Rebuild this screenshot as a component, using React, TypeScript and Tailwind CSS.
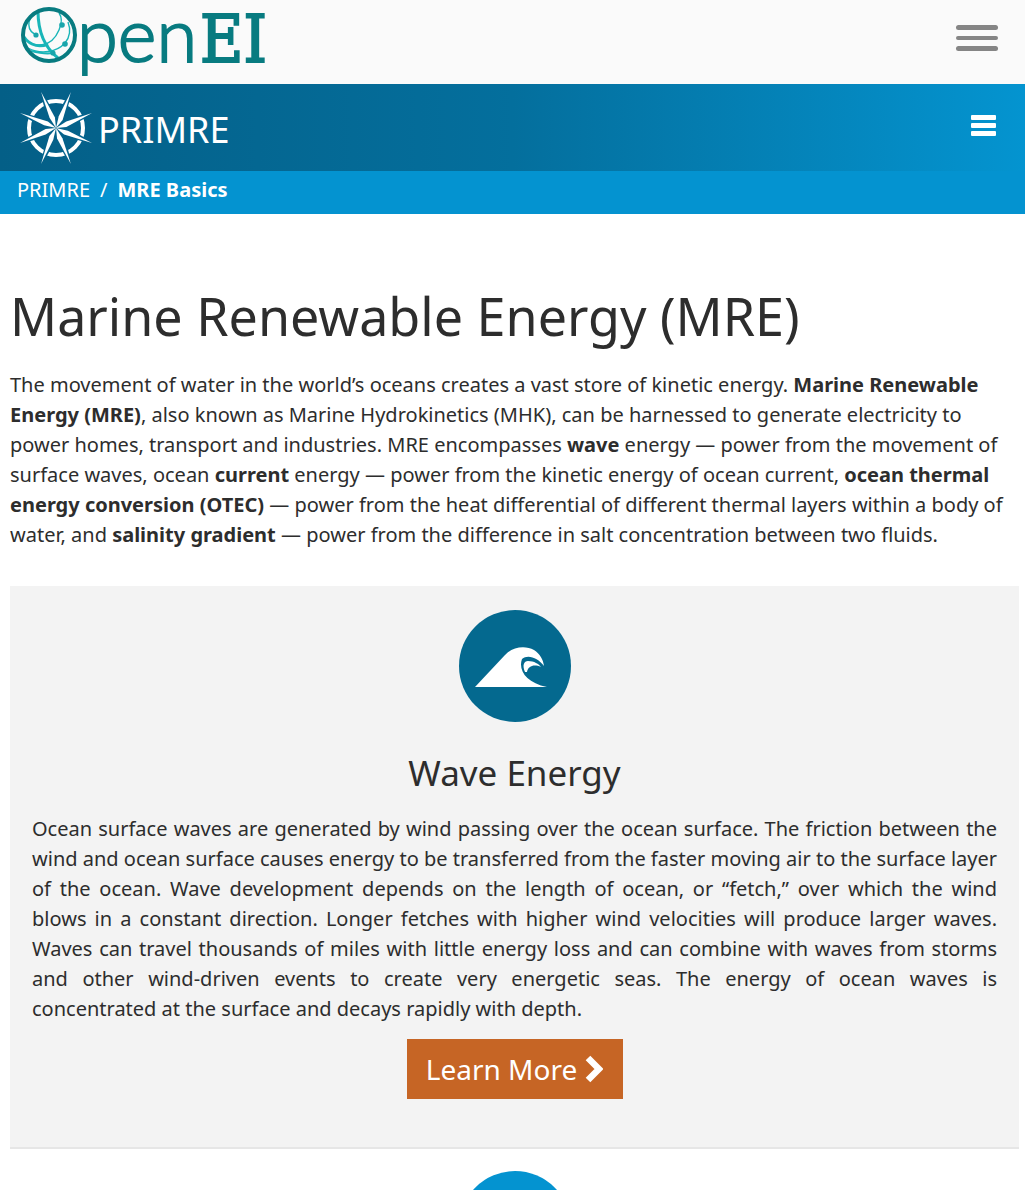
const spikes = [22.5, 67.5, 112.5, 157.5, 202.5, 247.5, 292.5, 337.5];

function GlobeMark() {
  return (
    <svg viewBox="0 0 56 58" className="mt-[6px] h-[58px] w-14 self-start" fill="none" aria-hidden="true">
      <g stroke="#19b5b8">
        <path d="M17 5 C17 24 23 41 37 52" strokeWidth="3" />
        <path d="M3 32 C12 42 30 43 38 24 C41 17 41 11 38 7" strokeWidth="1.4" />
        <path d="M3 31 C10 41 20 41 27 38" strokeWidth="3" />
        <path d="M16 29 C5 25 6 13 14 8" strokeWidth="1.4" />
        <path d="M7 42 C20 49 36 46 44 37 C49 31 50 24 47 16" strokeWidth="1.4" />
        <path d="M10 45 C18 47 26 48 32 47" strokeWidth="2" />
      </g>
      <g fill="#19a5ab">
        <circle cx="15" cy="29" r="2.6" />
        <circle cx="41" cy="19" r="2.8" />
        <circle cx="44" cy="38" r="2.8" />
        <circle cx="32" cy="47" r="2.6" />
      </g>
      <circle cx="28" cy="29" r="26" stroke="#087b80" strokeWidth="4" />
    </svg>
  );
}

function CompassMark() {
  return (
    <svg viewBox="-38 -40 76 80" className="h-20 w-[76px]" aria-hidden="true">
      <circle r="27" fill="none" stroke="#fff" strokeWidth="4" />
      {spikes.map((angle) => (
        <g key={angle} transform={`rotate(${angle})`}>
          <path d="M-2 -31 L2 -31 L3 -23 L-3 -23 Z" fill="#056590" />
          <path d="M0 -39 L3 -10 L0 0 L-2 -12 Z" fill="#fff" />
        </g>
      ))}
    </svg>
  );
}

function WaveIcon() {
  return (
    <svg viewBox="0 0 112 112" className="size-28" aria-hidden="true">
      <circle cx="56" cy="56" r="56" fill="#04698f" />
      <path
        d="M16 77 L46 45 C53 37 66 35 75 40 C81 44 84 49 85 56 C79 48 69 44 63 49 C59 60 67 73 88 77 Z"
        fill="#fff"
      />
      <path d="M66 62 C63 55 65 51 69 51 C75 51 80 54 82 57 C75 54 69 56 68 62 Z" fill="#fff" />
    </svg>
  );
}

export default function App() {
  return (
    <div className="h-screen overflow-hidden bg-white font-['Noto_Sans',sans-serif] text-[#2d2d2d]">
      {/* Site header */}
      <header className="flex h-[84px] items-start justify-between bg-[#fafafa] pr-[27px] pl-[21px]">
        <a href="#" className="flex items-baseline text-[#087b80]" aria-label="OpenEI">
          <GlobeMark />
          <span className="font-['Lato',sans-serif] text-[74px] leading-[68px] font-light [-webkit-text-stroke:2px]">
            pen
          </span>
          <span className="ml-[3px] font-['DejaVu_Serif_Condensed','DejaVu_Serif',serif] text-[66px] leading-[68px] [-webkit-text-stroke:2px]">
            EI
          </span>
        </a>
        <button type="button" aria-label="Open site menu" className="mt-[25px] flex w-[42px] flex-col gap-[6px]">
          <span className="h-[5px] w-full rounded-sm bg-[#858585]" />
          <span className="h-[4px] w-full rounded-sm bg-[#858585]" />
          <span className="h-[5px] w-full rounded-sm bg-[#858585]" />
        </button>
      </header>

      {/* PRIMRE bar */}
      <nav className="flex h-[87px] items-start justify-between bg-linear-to-r from-[#045f87] via-[#046f9d] to-[#0494d0] pr-[29px] pl-[18px]">
        <a href="#" className="mt-1 flex items-center gap-1 text-[36px] leading-[48px] text-white">
          <CompassMark />
          <span className="pt-1">PRIMRE</span>
        </a>
        <button type="button" aria-label="Open PRIMRE menu" className="mt-[31px] flex w-[25px] flex-col gap-[3px]">
          <span className="h-[5px] w-full rounded-[1px] bg-white" />
          <span className="h-[5px] w-full rounded-[1px] bg-white" />
          <span className="h-[5px] w-full rounded-[1px] bg-white" />
        </button>
      </nav>
      <div className="flex h-[43px] gap-[10px] bg-[#0493d0] px-[17px] text-[20px] leading-[38px] text-white">
        <a href="#">PRIMRE</a>
        <span>/</span>
        <span className="font-bold">MRE Basics</span>
      </div>

      <main className="pt-[66px] pr-[6px] pl-[10px]">
        <h1 className="text-[52px] leading-[72px]">Marine Renewable Energy (MRE)</h1>
        <p className="mt-[18px] text-[20px] leading-[30px]">
          The movement of water in the world’s oceans creates a vast store of kinetic energy.{' '}
          <b>Marine Renewable Energy (MRE)</b>, also known as Marine Hydrokinetics (MHK), can be harnessed to
          generate electricity to power homes, transport and industries. MRE encompasses <b>wave</b> energy —
          power from the movement of surface waves, ocean <b>current</b> energy — power from the kinetic energy
          of ocean current, <b>ocean thermal energy conversion (OTEC)</b> — power from the heat differential of
          different thermal layers within a body of water, and <b>salinity gradient</b> — power from the
          difference in salt concentration between two fluids.
        </p>

        <section className="mt-9 flex flex-col items-center border-b-2 border-[#e6e6e6] bg-[#f3f3f3] px-[22px] pt-6 pb-12">
          <WaveIcon />
          <h2 className="mt-6 text-[35px] leading-[54px]">Wave Energy</h2>
          <p className="mt-[14px] text-justify text-[20px] leading-[30px]">
            Ocean surface waves are generated by wind passing over the ocean surface. The friction between the
            wind and ocean surface causes energy to be transferred from the faster moving air to the surface
            layer of the ocean. Wave development depends on the length of ocean, or “fetch,” over which the wind
            blows in a constant direction. Longer fetches with higher wind velocities will produce larger waves.
            Waves can travel thousands of miles with little energy loss and can combine with waves from storms
            and other wind-driven events to create very energetic seas. The energy of ocean waves is{' '}
            <span className="whitespace-nowrap">concentrated at</span> the surface and decays rapidly with depth.
          </p>
          <a
            href="#"
            className="mt-[15px] flex h-[60px] w-[216px] items-center justify-center gap-2 bg-[#c66525] text-[28px] text-white"
          >
            Learn More
            <svg viewBox="0 0 18 28" className="h-7 w-[18px]" fill="none" aria-hidden="true">
              <path d="M3 3 L14 14 L3 25" stroke="#fff" strokeWidth="6.5" />
            </svg>
          </a>
        </section>

        <section className="flex justify-center pt-[22px]">
          <div className="size-28 rounded-full bg-[#0493d0]" />
        </section>
      </main>
    </div>
  );
}
